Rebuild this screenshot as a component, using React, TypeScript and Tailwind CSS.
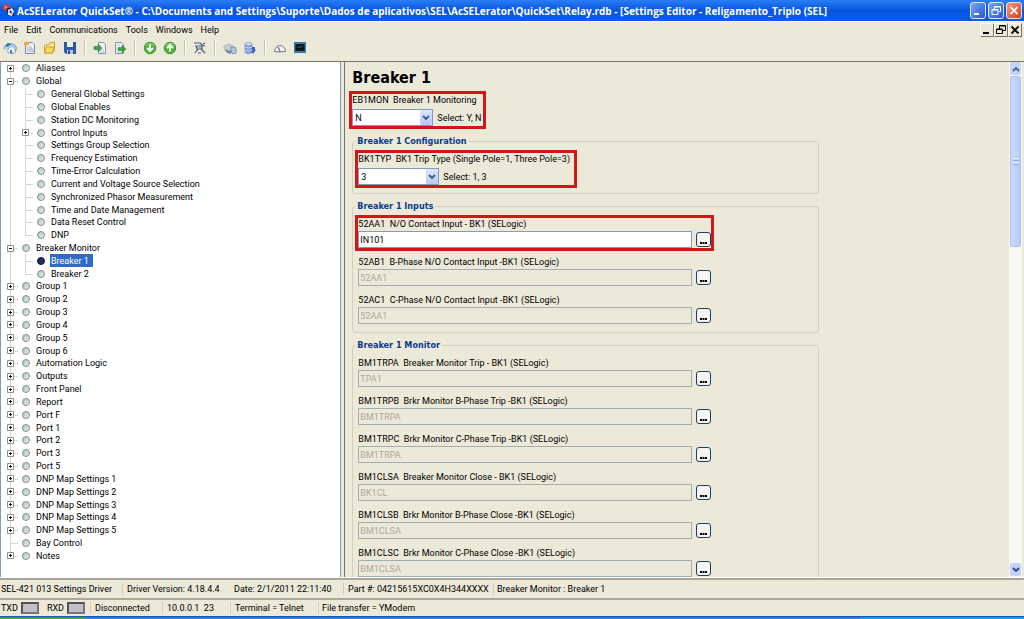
import React, { useState } from "react";
import clsx from "clsx";

type Node = { label: string; leaf?: boolean; children?: Node[] };

const leaf = (label: string): Node => ({ label, leaf: true });

const tree: Node[] = [
  { label: "Aliases" },
  {
    label: "Global",
    children: [
      leaf("General Global Settings"),
      leaf("Global Enables"),
      leaf("Station DC Monitoring"),
      { label: "Control Inputs" },
      leaf("Settings Group Selection"),
      leaf("Frequency Estimation"),
      leaf("Time-Error Calculation"),
      leaf("Current and Voltage Source Selection"),
      leaf("Synchronized Phasor Measurement"),
      leaf("Time and Date Management"),
      leaf("Data Reset Control"),
      leaf("DNP"),
    ],
  },
  { label: "Breaker Monitor", children: [leaf("Breaker 1"), leaf("Breaker 2")] },
  { label: "Group 1" },
  { label: "Group 2" },
  { label: "Group 3" },
  { label: "Group 4" },
  { label: "Group 5" },
  { label: "Group 6" },
  { label: "Automation Logic" },
  { label: "Outputs" },
  { label: "Front Panel" },
  { label: "Report" },
  { label: "Port F" },
  { label: "Port 1" },
  { label: "Port 2" },
  { label: "Port 3" },
  { label: "Port 5" },
  { label: "DNP Map Settings 1" },
  { label: "DNP Map Settings 2" },
  { label: "DNP Map Settings 3" },
  { label: "DNP Map Settings 4" },
  { label: "DNP Map Settings 5" },
  leaf("Bay Control"),
  { label: "Notes" },
];

const menus = ["File", "Edit", "Communications", "Tools", "Windows", "Help"];

const TitleBar = () => (
  <header className="flex h-[21px] shrink-0 items-center bg-linear-to-b from-[#2a7df5] via-[#0855dd] to-[#0a5cf0] pr-0.5 pl-[3px] text-white">
    <svg viewBox="0 0 12 14" className="mr-0.5 h-3.5 w-3 shrink-0">
      <path d="M3 4h8v8H5z" fill="#1a2a55" />
      <path d="M5 6l4-2 2 3-2 5-4-1z" fill="#dfe6f2" />
      <path d="M6 8l2-2 1 4z" fill="#26345f" />
      <path d="M0 2l2-2 2 1 2-1 1 3-3 1-1 3-3-2z" fill="#e2402c" />
      <path d="M2 2l2 1-1 2z" fill="#fbd8cf" />
    </svg>
    <h1 className="min-w-0 flex-1 truncate font-['Open_Sans',sans-serif] text-[10px] leading-4 font-bold">
      AcSELerator QuickSet® - C:\Documents and Settings\Suporte\Dados de
      aplicativos\SEL\AcSELerator\QuickSet\Relay.rdb - [Settings Editor -
      Religamento_Triplo (SEL]
    </h1>
    <div className="flex gap-0.5">
      <button
        aria-label="Minimize"
        className="h-[17px] w-4 rounded-[3px] border border-[#dfe9fb] bg-linear-to-br from-[#7aa4f3] to-[#2456cf]"
      >
        <svg viewBox="0 0 14 15" className="h-full w-full">
          <path d="M3 11h5" stroke="#fff" strokeWidth="2" />
        </svg>
      </button>
      <button
        aria-label="Restore"
        className="h-[17px] w-4 rounded-[3px] border border-[#dfe9fb] bg-linear-to-br from-[#7aa4f3] to-[#2456cf]"
      >
        <svg viewBox="0 0 14 15" className="h-full w-full" fill="none" stroke="#fff">
          <path d="M5.5 6V3.500h6v5H10M5.500 4h6M3 6.500h6v5H3zM3 7h6" />
        </svg>
      </button>
      <button
        aria-label="Close"
        className="h-[17px] w-4 rounded-[3px] border border-[#f3dcd6] bg-linear-to-br from-[#ee9a80] to-[#cf3d17]"
      >
        <svg viewBox="0 0 14 15" className="h-full w-full">
          <path d="M3.500 4l7 7M10.500 4l-7 7" stroke="#fff" strokeWidth="1.700" />
        </svg>
      </button>
    </div>
  </header>
);

const MdiButton = ({ label, children }: { label: string; children: React.ReactNode }) => (
  <button
    aria-label={label}
    className="h-3.5 w-[14px] border border-t-white border-r-[#77756a] border-b-[#77756a] border-l-white"
  >
    <svg viewBox="0 0 12 12" className="h-full w-full" fill="none" stroke="#000">
      {children}
    </svg>
  </button>
);

const MenuBar = () => (
  <nav className="flex h-[17px] shrink-0 items-center border-t border-[#f7f6f0] pl-1">
    <div className="flex flex-1 gap-2">
      {menus.map((m) => (
        <button key={m}>{m}</button>
      ))}
    </div>
    <div className="flex pr-0.5">
      <MdiButton label="Minimize window">
        <path d="M2 9h6" strokeWidth="2" />
      </MdiButton>
      <MdiButton label="Restore window">
        <path d="M4.500 5V1.500h6v5H8M4.500 2h6M1.500 5.500h6v4h-6zM1.500 5h6" />
      </MdiButton>
      <MdiButton label="Close window">
        <path d="M2.500 2.500l7 7M9.500 2.500l-7 7" strokeWidth="1.800" />
      </MdiButton>
    </div>
  </nav>
);

const Tool = ({ label, children }: { label: string; children: React.ReactNode }) => (
  <button aria-label={label} className="flex w-5 items-center justify-center">
    <svg viewBox="0 0 14 14" className="h-3.5 w-3.5" fill="none">
      {children}
    </svg>
  </button>
);

const Separator = () => (
  <span className="mx-1 my-0.5 w-0.5 border-r border-l border-r-white border-l-[#c2bfae]" />
);

const ToolBar = () => (
  <div className="flex h-[23px] shrink-0 items-stretch pb-1">
    <Tool label="Home">
      <path d="M1 8c0-4 4-6 7-5 4 0 6 3 5 6-1 3-4 4-6 3" fill="#b7d8ec" stroke="#5b94bb" />
      <path d="M2 5l3-3 3 1-3 3z" fill="#3479ab" />
      <path d="M5 8l4-3 3 3v4H5z" fill="#f2f8fc" stroke="#6e9cba" strokeWidth=".7" />
      <path d="M7 9h2v3H7z" fill="#3e80ad" />
    </Tool>
    <Tool label="New">
      <path d="M2.500 1.500h7l2 2v9h-9z" fill="#eef1fa" stroke="#7d86ab" />
      <path d="M4 6h5M4 8h6M4 10h6" stroke="#a4b2d6" />
      <path d="M1 1h5v3H1z" fill="#f0a04b" />
      <path d="M8 8l3 3" stroke="#d9a36b" />
    </Tool>
    <Tool label="Open">
      <path d="M1.500 5l1-1h3l1-2 5-1v8l-2 3h-8z" fill="#fbe48a" stroke="#c79a2b" />
      <path d="M1.500 12l2-6h7l-1 6z" fill="#fdd95a" stroke="#c79a2b" strokeWidth=".8" />
    </Tool>
    <Tool label="Save">
      <path d="M1 1h12v12H3l-2-2z" fill="#2d5c9e" />
      <path d="M4 1h6v5H4z" fill="#e9f0f8" />
      <path d="M4 9h6v4H4z" fill="#b9cbe2" />
      <path d="M5 9.500h2V13H5z" fill="#27477c" />
    </Tool>
    <Separator />
    <Tool label="Read settings">
      <path d="M5.500 1.500h5l2 2v9h-7z" fill="#eef4fb" stroke="#7f93ad" />
      <path d="M7 9h4M7 11h4" stroke="#b2c0d4" />
      <path d="M1 5.500h4V3l4 4-4 4V8.500H1z" fill="#3f9f45" stroke="#277b30" strokeWidth=".5" />
    </Tool>
    <Tool label="Send settings">
      <path d="M2.500 1.500h6l2 2v9h-8z" fill="#eef4fb" stroke="#7f93ad" />
      <path d="M4 4h3M4 11h4" stroke="#b2c0d4" />
      <path d="M5 6.500h4V4l4 4-4 4V9.500H5z" fill="#3f9f45" stroke="#277b30" strokeWidth=".5" />
    </Tool>
    <Separator />
    <Tool label="Download">
      <circle cx="7" cy="7" r="5.800" fill="#52b43a" stroke="#2f8a22" strokeWidth=".8" />
      <path d="M3 5a4.500 4.500 0 0 1 8 0" stroke="#9bdc84" />
      <path d="M7 3.500v6M4 7l3 3 3-3" stroke="#fff" strokeWidth="1.800" />
    </Tool>
    <Tool label="Upload">
      <circle cx="7" cy="7" r="5.800" fill="#52b43a" stroke="#2f8a22" strokeWidth=".8" />
      <path d="M3 5a4.500 4.500 0 0 1 8 0" stroke="#9bdc84" />
      <path d="M7 10.500v-6M4 7l3-3 3 3" stroke="#fff" strokeWidth="1.800" />
    </Tool>
    <Separator />
    <Tool label="Device tools">
      <path d="M1 2h6l2 2 3 1M3 5h6v3H4zM2 12l3-4M12 12L8 8M5 12h3M10 3l2-1" stroke="#4f5a73" strokeWidth="1.200" />
      <path d="M4 5h4v2H4z" fill="#9db0d3" />
      <path d="M9 9l3 3" stroke="#7c8db1" strokeWidth="2" />
    </Tool>
    <Separator />
    <Tool label="Relay editor">
      <path d="M1 5l5-2 4 2v3L6 10 1 8z" fill="#c9ccd3" stroke="#a0a5ae" strokeWidth=".6" />
      <path d="M2 8l4 2 4-2v2l-3 3-4-2z" fill="#7c848f" />
      <path d="M8 6h4l1 2v4l-3 1-2-2z" fill="#a8c8e4" stroke="#5a7895" strokeWidth=".7" />
    </Tool>
    <Tool label="Database">
      <path d="M2 3v8c0 2 7 2 7 0V3z" fill="#8aa1dc" stroke="#5a70b8" strokeWidth=".6" />
      <ellipse cx="5.500" cy="3" rx="3.500" ry="1.700" fill="#d6dff6" stroke="#6c80c0" strokeWidth=".6" />
      <path d="M2 6c1 1 6 1 7 0M2 9c1 1 6 1 7 0" stroke="#dfe6fa" strokeWidth=".7" />
      <path d="M9 6h3v3h1l-3 4-2-3h1z" fill="#4560c4" />
    </Tool>
    <Separator />
    <Tool label="Meter">
      <path d="M1.500 10.500a5.500 6 0 0 1 11 0z" fill="#f4f4f4" stroke="#7b7b84" />
      <path d="M7 10L5 6" stroke="#44444c" />
      <path d="M3 11h8" stroke="#a5a5ad" />
    </Tool>
    <Tool label="Terminal">
      <path d="M1 1h12v11H1z" fill="#2f7fa6" />
      <path d="M2.500 3h9v7h-9z" fill="#06151c" />
      <path d="M4 6h2l1 1 1-2h2" stroke="#2b7a57" strokeWidth=".7" />
    </Tool>
  </div>
);

// vertical guide inside a 15px tree column, optionally cut at the row's middle
const Guide = ({ from, to }: { from?: boolean; to?: boolean }) => (
  <span
    className={clsx(
      "absolute left-[7px] w-px bg-[#d6d6d6]",
      from ? "top-1/2" : "top-0",
      to ? "bottom-1/2" : "bottom-0"
    )}
  />
);

type RowProps = {
  node: Node;
  depth: number;
  first?: boolean;
  last?: boolean;
  selected: string;
  onSelect: (label: string) => void;
};

const TreeRow = ({ node, depth, first, last, selected, onSelect }: RowProps) => {
  const active = node.label === selected;
  return (
    <li className="flex min-h-3 flex-1 items-stretch pl-[3px]">
      {depth > 0 && (
        <span className="relative w-[15px]">
          <Guide />
        </span>
      )}
      <span className="relative flex w-[15px] items-center justify-center">
        <Guide from={first} to={last} />
        <span className="absolute top-1/2 right-0 left-[7px] h-px bg-[#d6d6d6]" />
        {!node.leaf && (
          <svg viewBox="0 0 7 7" className="relative h-[7px] w-[7px]" fill="none">
            <path d="M.5.500h6v6h-6z" fill="#fff" stroke="#8f8f8f" />
            <path
              d={node.children ? "M2 3.500h3" : "M2 3.500h3M3.500 2v3"}
              stroke="#111"
            />
          </svg>
        )}
      </span>
      <span className="flex w-[15px] items-center justify-center">
        <span
          className={clsx(
            "h-2 w-2 rounded-full border",
            active
              ? "border-[#0d1838] bg-[#1c2f63]"
              : "border-[#7d8f88] bg-linear-to-br from-[#b4c4be] to-[#e6eeea]"
          )}
        />
      </span>
      <button
        onClick={() => onSelect(node.label)}
        className={clsx(
          "ml-0.5 flex items-center px-px whitespace-nowrap",
          active && "bg-[#316ac5] pr-1 text-white"
        )}
      >
        {node.label}
      </button>
    </li>
  );
};

const SettingsTree = () => {
  const [selected, setSelected] = useState("Breaker 1");
  return (
    <aside className="w-1/3 shrink-0 overflow-hidden border-r border-l border-[#7f9db9] bg-white pb-[15px]">
      <ul className="-ml-px flex h-full flex-col">
        {tree.map((node, i) => (
          <React.Fragment key={node.label}>
            <TreeRow
              node={node}
              depth={0}
              first={i === 0}
              last={i === tree.length - 1}
              selected={selected}
              onSelect={setSelected}
            />
            {node.children?.map((child, j) => (
              <TreeRow
                key={child.label}
                node={child}
                depth={1}
                last={j === node.children!.length - 1}
                selected={selected}
                onSelect={setSelected}
              />
            ))}
          </React.Fragment>
        ))}
      </ul>
    </aside>
  );
};

type FieldProps = { id: string; text: string; value: string };

const SelectField = ({ id, text, value, options }: FieldProps & { options: string[] }) => (
  <div className="w-fit border-[3px] border-[#d01818]">
    <label htmlFor={id} className="mb-0.5 block h-[13px] pr-1 leading-[13px] whitespace-pre">
      {id + "  " + text}
    </label>
    <div className="flex items-center gap-1">
      <div className="relative w-[81px]">
        <select
          id={id}
          defaultValue={value}
          className="block h-[17px] w-full appearance-none border border-[#7f9db9] bg-white pl-0.5"
        >
          {options.map((o) => (
            <option key={o}>{o}</option>
          ))}
        </select>
        <span className="pointer-events-none absolute inset-y-px right-px flex w-3 items-center justify-center rounded-[2px] bg-linear-to-b from-[#dbe6fe] to-[#b3c8f7]">
          <svg viewBox="0 0 8 6" className="h-1.5 w-2" fill="none">
            <path d="M1 1l3 3 3-3" stroke="#3f5684" strokeWidth="1.800" />
          </svg>
        </span>
      </div>
      <span className="pr-0.5">Select: {options.join(", ")}</span>
    </div>
  </div>
);

const TextField = ({ id, text, value, enabled }: FieldProps & { enabled?: boolean }) => (
  <div
    className={clsx(
      "w-fit border-[3px]",
      enabled ? "border-[#d01818]" : "border-transparent"
    )}
  >
    <label htmlFor={id} className="block h-[13px] leading-[13px] whitespace-pre">
      {id + "  " + text}
    </label>
    <div className="flex items-center gap-1">
      <input
        id={id}
        defaultValue={value}
        disabled={!enabled}
        className={clsx(
          "h-[17px] w-[334px] border px-px",
          enabled ? "border-[#7f9db9] bg-white" : "border-[#a3aeb4] text-[#aca899]"
        )}
      />
      <button
        aria-label={"Edit " + id}
        className="flex h-[15px] w-[15px] items-end justify-center rounded-[3px] border border-[#1d3f6e] bg-[#f6f5f1] pb-0.5"
      >
        <svg viewBox="0 0 7 2" className="h-0.5 w-[7px]">
          <path d="M0 0h2v2H0zM2.500 0h2v2h-2zM5 0h2v2H5z" />
        </svg>
      </button>
    </div>
  </div>
);

const Group = ({ title, children }: { title: string; children: React.ReactNode }) => (
  <fieldset className="ml-[3px] w-[467px] rounded-[3px] border border-[#d3d0bd] px-0.5 pb-[5px]">
    <legend className="mb-[3px] h-3 px-0.5 font-['DejaVu_Sans_Condensed','DejaVu_Sans',sans-serif] leading-3 font-bold text-[#0a3a8c]">
      {title}
    </legend>
    <div className="flex flex-col gap-0.5">{children}</div>
  </fieldset>
);

const ScrollBar = () => (
  <div className="flex w-[13px] shrink-0 flex-col bg-[#f8f8f4] px-px">
    <button
      aria-label="Scroll up"
      className="flex h-[13px] items-center justify-center rounded-[2px] bg-[#c3d3fb]"
    >
      <svg viewBox="0 0 8 6" className="h-1.5 w-2" fill="none">
        <path d="M1 5l3-3 3 3" stroke="#4d6185" strokeWidth="1.800" />
      </svg>
    </button>
    <div className="flex-1">
      <div className="mt-px flex h-[35%] flex-col items-center justify-center gap-px rounded-[2px] border border-[#a9bfee] bg-linear-to-r from-[#cbdafd] to-[#b7cbfa]">
        <span className="h-px w-1.5 bg-[#eef4fe]" />
        <span className="h-px w-1.5 bg-[#8cb0f8]" />
        <span className="h-px w-1.5 bg-[#eef4fe]" />
        <span className="h-px w-1.5 bg-[#8cb0f8]" />
      </div>
    </div>
    <button
      aria-label="Scroll down"
      className="mb-px flex h-[13px] items-center justify-center rounded-[2px] bg-[#c3d3fb]"
    >
      <svg viewBox="0 0 8 6" className="h-1.5 w-2" fill="none">
        <path d="M1 1l3 3 3-3" stroke="#32457a" strokeWidth="1.800" />
      </svg>
    </button>
  </div>
);

const Editor = () => (
  <main className="ml-[3px] flex min-w-0 flex-1 border-l border-[#77756a] pr-0.5">
    <div className="flex flex-1 flex-col gap-1.5 overflow-hidden pl-1">
      <div>
        <h2 className="mt-1.5 mb-[3px] ml-[3px] font-['DejaVu_Sans_Condensed','DejaVu_Sans',sans-serif] text-[16px] leading-5 font-bold">
          Breaker 1
        </h2>
        <SelectField id="EB1MON" text="Breaker 1 Monitoring" value="N" options={["Y", "N"]} />
      </div>
      <Group title="Breaker 1 Configuration">
        <SelectField
          id="BK1TYP"
          text="BK1 Trip Type (Single Pole=1, Three Pole=3)"
          value="3"
          options={["1", "3"]}
        />
      </Group>
      <Group title="Breaker 1 Inputs">
        <TextField id="52AA1" text="N/O Contact Input - BK1 (SELogic)" value="IN101" enabled />
        <TextField id="52AB1" text="B-Phase N/O Contact Input -BK1 (SELogic)" value="52AA1" />
        <TextField id="52AC1" text="C-Phase N/O Contact Input -BK1 (SELogic)" value="52AA1" />
      </Group>
      <Group title="Breaker 1 Monitor">
        <TextField id="BM1TRPA" text="Breaker Monitor Trip - BK1 (SELogic)" value="TPA1" />
        <TextField id="BM1TRPB" text="Brkr Monitor B-Phase Trip -BK1 (SELogic)" value="BM1TRPA" />
        <TextField id="BM1TRPC" text="Brkr Monitor C-Phase Trip -BK1 (SELogic)" value="BM1TRPA" />
        <TextField id="BM1CLSA" text="Breaker Monitor Close - BK1 (SELogic)" value="BK1CL" />
        <TextField id="BM1CLSB" text="Brkr Monitor B-Phase Close -BK1 (SELogic)" value="BM1CLSA" />
        <TextField id="BM1CLSC" text="Brkr Monitor C-Phase Close -BK1 (SELogic)" value="BM1CLSA" />
      </Group>
    </div>
    <ScrollBar />
  </main>
);

const Led = ({ label }: { label: string }) => (
  <span className="flex items-center gap-[3px]">
    {label}
    <span className="h-3 w-[18px] border-2 border-t-[#55534f] border-r-[#77757a] border-b-[#77757a] border-l-[#55534f] bg-[#c2bfc6]" />
  </span>
);

const StatusBars = () => (
  <footer className="shrink-0">
    <div className="flex h-5 items-center border-t-2 border-[#aaa796] whitespace-nowrap">
      <span className="w-[122px] pl-px">SEL-421 013 Settings Driver</span>
      <span className="w-[107px] border-l border-[#cfccba] pl-1">Driver Version: 4.18.4.4</span>
      <span className="w-[114px] pl-[5px]">Date: 2/1/2011 22:11:40</span>
      <span className="w-[150px] border-l border-[#cfccba] pl-1">Part #: 04215615XC0X4H344XXXX</span>
      <span className="flex-1 border-l border-[#cfccba] pl-[3px]">Breaker Monitor : Breaker 1</span>
    </div>
    <div className="flex h-[18px] items-center border-t-2 border-[#aaa796] whitespace-nowrap">
      <span className="flex w-[90px] gap-2 pl-px">
        <Led label="TXD" />
        <Led label="RXD" />
      </span>
      <span className="w-[72px] border-l border-[#cfccba] pl-1">Disconnected</span>
      <span className="w-[68px] border-l border-[#cfccba] pl-1 whitespace-pre">{"10.0.0.1  23"}</span>
      <span className="w-[88px] border-l border-[#cfccba] pl-1">Terminal = Telnet</span>
      <span className="flex-1 border-l border-[#cfccba] pl-[3px]">File transfer = YModem</span>
    </div>
    <div className="flex h-[3px] border-t border-[#1d55b0]">
      <span className="w-1/12 bg-[#3fa53c]" />
      <span className="flex-1 bg-[#2a7be4]" />
      <span className="w-[16%] bg-[#149bf0]" />
    </div>
  </footer>
);

export default function App() {
  return (
    <div className="flex h-screen flex-col overflow-hidden bg-[#ece9d8] font-[Roboto,sans-serif] text-[9px] leading-3 text-black">
      <TitleBar />
      <MenuBar />
      <ToolBar />
      <div className="flex min-h-0 flex-1 border-t border-b border-t-[#77756a] border-b-white">
        <SettingsTree />
        <Editor />
      </div>
      <StatusBars />
    </div>
  );
}
